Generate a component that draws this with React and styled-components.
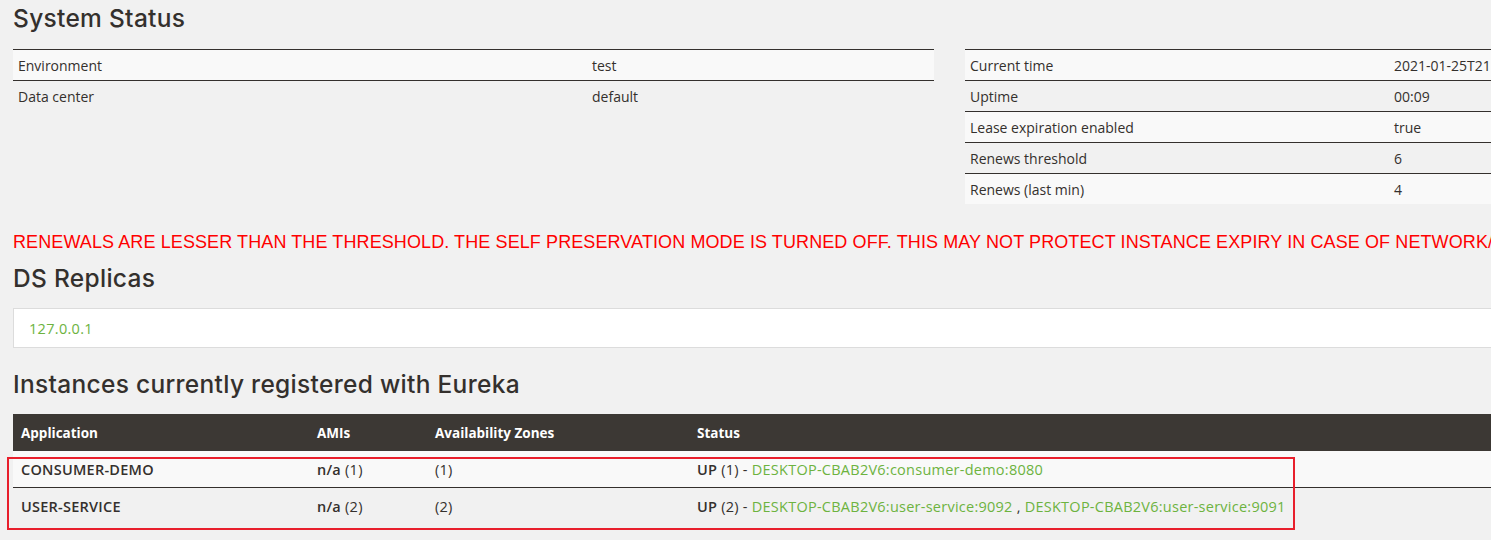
import styled, { createGlobalStyle } from "styled-components";

const GlobalStyle = createGlobalStyle`
  html, body {
    margin: 0;
    padding: 0;
    overflow: hidden;
    background: #f1f1f1;
  }
  body {
    font-family: "Open Sans", "Noto Sans", sans-serif;
    font-size: 14px;
    color: #34302d;
  }
`;

const Page = styled.div`
  width: 1900px;
  min-height: 540px;
  box-sizing: border-box;
  padding: 5px 0 0 13px;
  position: relative;
`;

const Heading = styled.h2`
  font-family: Inter, "Noto Sans", sans-serif;
  font-weight: 500;
  font-size: 24.5px;
  line-height: 26px;
  margin: ${(p) => p.$mt || 0}px 0 ${(p) => p.$mb || 0}px;
  color: #34302d;
  letter-spacing: 0.3px;
`;

const StatusRow = styled.div`
  display: flex;
  align-items: flex-start;
  gap: 31px;
`;

const InfoTable = styled.div`
  width: 921px;
  border-top: 1px solid #34302d;
`;

const InfoRow = styled.div`
  display: grid;
  grid-template-columns: ${(p) => p.$split}px 1fr;
  height: 30px;
  align-items: center;
  padding-left: 5px;
  font-size: 14px;
  background: ${(p) => (p.$odd ? "#f9f9f9" : "#f1f1f1")};
  border-bottom: ${(p) => (p.$last ? "none" : "1px solid #34302d")};
  white-space: nowrap;
`;

const Warning = styled.div`
  margin-top: 28px;
  color: #ff0000;
  font-family: "Liberation Sans", Arial, sans-serif;
  font-size: 18px;
  line-height: 20px;
  letter-spacing: 0.1px;
  white-space: nowrap;
`;

const ReplicaBox = styled.div`
  background: #fff;
  border: 1px solid #dcdcdc;
  height: 40px;
  box-sizing: border-box;
  display: flex;
  align-items: center;
  padding-left: 15px;
  font-size: 14.5px;
  letter-spacing: 0.3px;
`;

const Link = styled.a`
  color: #6db33f;
  text-decoration: none;
`;

const Grid = styled.div`
  display: grid;
  grid-template-columns: 296px 118px 262px 1fr;
  height: ${(p) => (p.$head ? 37 : 36)}px;
  align-items: center;
  padding-left: 8px;
  white-space: nowrap;
  font-size: ${(p) => (p.$head ? 13.5 : 14.5)}px;
  letter-spacing: ${(p) => (p.$head ? 0 : 0.25)}px;
  background: ${(p) => (p.$head ? "#3c3834" : p.$odd ? "#f9f9f9" : "#f1f1f1")};
  color: ${(p) => (p.$head ? "#fff" : "#34302d")};
  font-weight: ${(p) => (p.$head ? 700 : 400)};
  border-bottom: ${(p) => (p.$divider ? "1px solid #34302d" : "none")};
`;

const Strong = styled.b`
  font-weight: 600;
`;

const Marker = styled.div`
  position: absolute;
  left: 7px;
  top: 457px;
  width: 1284px;
  height: 69px;
  border: 2px solid #e81f2c;
  pointer-events: none;
`;

const left = [
  ["Environment", "test"],
  ["Data center", "default"],
];

const right = [
  ["Current time", "2021-01-25T21:45:13 +0800"],
  ["Uptime", "00:09"],
  ["Lease expiration enabled", "true"],
  ["Renews threshold", "6"],
  ["Renews (last min)", "4"],
];

const apps = [
  {
    name: "CONSUMER-DEMO",
    count: 1,
    links: ["DESKTOP-CBAB2V6:consumer-demo:8080"],
  },
  {
    name: "USER-SERVICE",
    count: 2,
    links: ["DESKTOP-CBAB2V6:user-service:9092", "DESKTOP-CBAB2V6:user-service:9091"],
  },
];

export default function App() {
  return (
    <>
      <GlobalStyle />
      <Page>
        <Heading $mb={18}>System Status</Heading>
        <StatusRow>
          <InfoTable>
            {left.map(([k, v], i) => (
              <InfoRow key={k} $split={574} $odd={i % 2 === 0} $last={i === left.length - 1}>
                <span>{k}</span>
                <span>{v}</span>
              </InfoRow>
            ))}
          </InfoTable>
          <InfoTable>
            {right.map(([k, v], i) => (
              <InfoRow key={k} $split={424} $odd={i % 2 === 0} $last={i === right.length - 1}>
                <span>{k}</span>
                <span>{v}</span>
              </InfoRow>
            ))}
          </InfoTable>
        </StatusRow>

        <Warning>
          RENEWALS ARE LESSER THAN THE THRESHOLD. THE SELF PRESERVATION MODE IS TURNED OFF. THIS MAY NOT PROTECT
          INSTANCE EXPIRY IN CASE OF NETWORK/OTHER PROBLEMS.
        </Warning>

        <Heading $mt={13} $mb={17}>DS Replicas</Heading>
        <ReplicaBox>
          <Link href="#">127.0.0.1</Link>
        </ReplicaBox>

        <Heading $mt={23} $mb={17}>Instances currently registered with Eureka</Heading>
        <div>
          <Grid $head>
            <span>Application</span>
            <span>AMIs</span>
            <span>Availability Zones</span>
            <span>Status</span>
          </Grid>
          {apps.map((a, i) => (
            <Grid key={a.name} $odd={i % 2 === 0} $divider={i < apps.length - 1}>
              <Strong>{a.name}</Strong>
              <span>
                <Strong>n/a</Strong> ({a.count})
              </span>
              <span>({a.count})</span>
              <span>
                <Strong>UP</Strong> ({a.count}) -{" "}
                {a.links.map((l, j) => (
                  <span key={l}>
                    {j > 0 && " , "}
                    <Link href="#">{l}</Link>
                  </span>
                ))}
              </span>
            </Grid>
          ))}
        </div>
        <Marker />
      </Page>
    </>
  );
}
